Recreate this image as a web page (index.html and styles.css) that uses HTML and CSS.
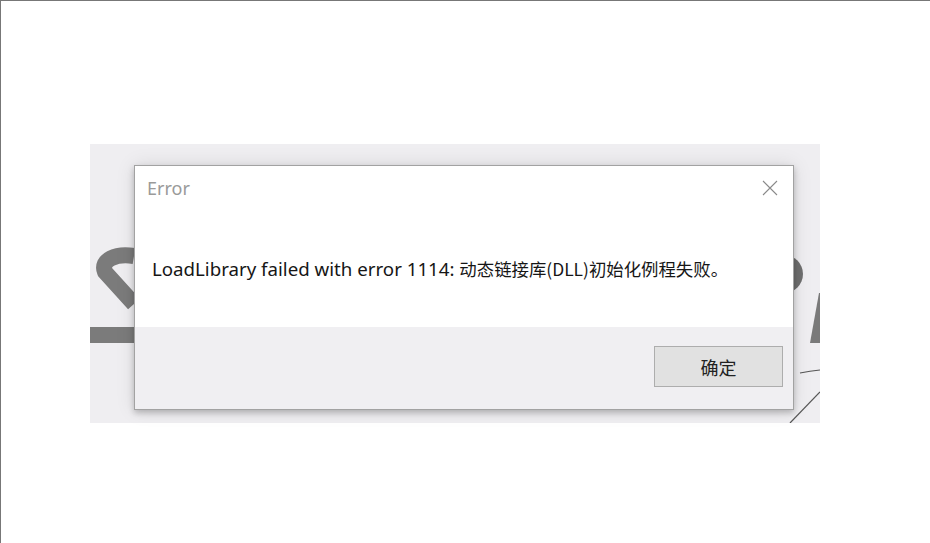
FILE: index.html
```html
<!DOCTYPE html>
<html lang="zh-CN">
<head>
<meta charset="utf-8">
<title>Error</title>
<link rel="stylesheet" href="styles.css">
</head>
<body>
<div class="frame">
  <div class="shot">
    <svg class="shot-bg" width="730" height="279" viewBox="0 0 730 279" aria-hidden="true">
      <path d="M44 112 C26 109 10 116 15 128 L44 160" fill="none" stroke="#7b7b7b" stroke-width="16"/>
      <rect x="0" y="183" width="44" height="16" fill="#7b7b7b"/>
      <circle cx="694" cy="130" r="19" fill="#6f6f6f"/>
      <polygon points="729,149 740,149 740,199 720,199" fill="#7a7a7a"/>
      <path d="M710 229 Q720 227 730 226" fill="none" stroke="#555" stroke-width="1.2"/>
      <path d="M700 279 L730 248" fill="none" stroke="#555" stroke-width="1.2"/>
    </svg>
    <div class="dialog">
      <div class="titlebar">
        <span class="title">Error</span>
        <svg class="close" width="16" height="16" viewBox="0 0 16 16" aria-hidden="true">
          <path d="M1 1 L15 15 M15 1 L1 15" stroke="#8a8a8a" stroke-width="1.1" fill="none"/>
        </svg>
      </div>
      <div class="message"><span class="latin">LoadLibrary failed with error 1114:&nbsp;</span><span class="cjk">动态链接库(DLL)初始化例程失败。</span></div>
      <div class="footer">
        <button class="btn">确定</button>
      </div>
    </div>
  </div>
</div>
</body>
</html>
```
FILE: styles.css
```css
html, body {
  margin: 0;
  padding: 0;
  background: #ffffff;
}
.frame {
  width: 930px;
  height: 543px;
  box-sizing: border-box;
  border-top: 1px solid #777777;
  border-left: 1px solid #777777;
  padding: 143px 0 0 89px;
  font-family: "Noto Sans", "Noto Sans CJK SC", sans-serif;
}
.shot {
  position: relative;
  width: 730px;
  height: 279px;
  box-sizing: border-box;
  padding: 21px 0 0 44px;
  background: #efeef1;
}
.shot-bg {
  position: absolute;
  left: 0;
  top: 0;
}
.dialog {
  position: relative;
  width: 660px;
  height: 245px;
  box-sizing: border-box;
  border: 1px solid #a2a2a2;
  background: #ffffff;
  display: flex;
  flex-direction: column;
  box-shadow: 0 3px 6px rgba(0, 0, 0, 0.22), 0 0 18px rgba(0, 0, 0, 0.10);
}
.titlebar {
  height: 44px;
  display: flex;
  align-items: center;
  justify-content: space-between;
  padding: 0 15px 0 12px;
}
.title {
  font-size: 18px;
  color: #9a9a9a;
}
.close {
  display: block;
  margin-top: -1px;
}
.message {
  flex: 1;
  display: flex;
  align-items: center;
  padding: 0 0 0 17px;
  color: #161616;
  white-space: nowrap;
}
.latin {
  font-size: 18.7px;
}
.cjk {
  font-family: "Noto Sans CJK SC", sans-serif;
  font-size: 17.4px;
}
.footer {
  height: 82px;
  background: #f0eff2;
  display: flex;
  justify-content: flex-end;
  align-items: flex-start;
  padding: 19px 10px 0 0;
  box-sizing: border-box;
}
.btn {
  width: 129px;
  height: 41px;
  border: 1px solid #adadad;
  background: #e1e1e1;
  font-family: "Noto Sans CJK SC", sans-serif;
  font-size: 18px;
  color: #222222;
  padding: 0;
}
```
